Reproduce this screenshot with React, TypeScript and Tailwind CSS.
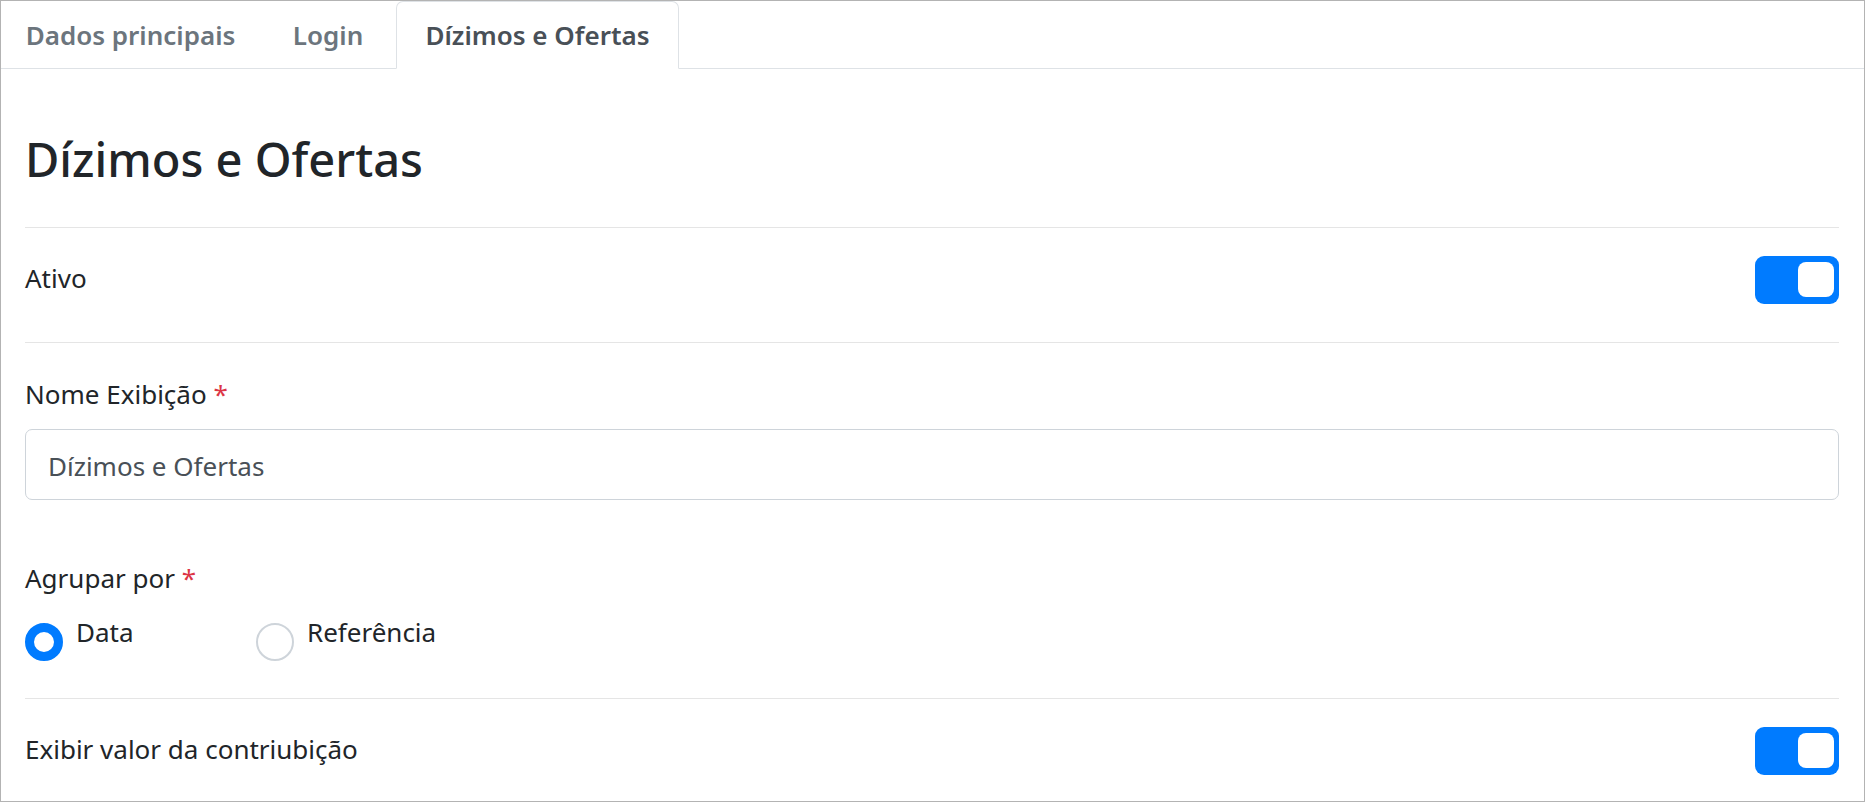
import { useState } from "react";

const FONT = { fontFamily: '"Noto Sans", "Open Sans", sans-serif' };

const tabs = [
  { label: "Dados principais", width: "w-[259px]" },
  { label: "Login", width: "w-[136px]" },
  { label: "Dízimos e Ofertas", width: "w-[283px]" },
];

const Toggle = ({ on }: { on: boolean }) => (
  <div
    className={`flex h-[48px] w-[84px] shrink-0 items-center rounded-[9px] px-[5px] ${
      on ? "justify-end bg-[#007bff]" : "justify-start bg-[#dee2e6]"
    }`}
  >
    <div className="mt-[-1px] h-[35px] w-[36px] rounded-[8px] bg-white"></div>
  </div>
);

const Radio = ({ checked, label }: { checked: boolean; label: string }) => (
  <div className="flex items-start">
    <div
      className={`mt-[12px] h-[38px] w-[38px] shrink-0 rounded-full ${
        checked ? "border-[9px] border-[#007bff]" : "border-2 border-[#ced4da]"
      }`}
    ></div>
    <span className="ml-[13px] leading-[42px]">{label}</span>
  </div>
);

const Required = () => <span className="text-[#dc3545]"> *</span>;

export default function App() {
  const [active, setActive] = useState(2);
  const [group, setGroup] = useState("data");

  return (
    <div
      className="h-[802px] w-[1865px] overflow-hidden border border-[#b3b3b3] bg-white text-[26px] text-[#212529]"
      style={FONT}
    >
      {/* Tabs */}
      <div className="flex h-[68px] border-b border-[#dee2e6]">
        {tabs.map((tab, i) => (
          <button
            key={tab.label}
            onClick={() => setActive(i)}
            className={`${tab.width} mb-[-1px] h-[68px] rounded-t-[7px] border pt-[12px] text-center align-top font-semibold leading-[42px] ${
              active === i
                ? "border-[#dee2e6] border-b-white bg-white text-[#495057]"
                : "border-transparent text-[#6c757d]"
            }`}
          >
            <div className="flex h-full items-start justify-center">{tab.label}</div>
          </button>
        ))}
      </div>

      <div className="pl-[24px] pr-[25px]">
        <div className="pb-[34px] pt-[57px]">
          <h2 className="text-[47px] font-medium leading-[67px]">Dízimos e Ofertas</h2>
        </div>

        <div className="border-t border-[#e5e5e5]"></div>

        <div className="mb-[38px] mt-[28px] flex items-start justify-between">
          <span className="mt-[1px] leading-[42px]">Ativo</span>
          <Toggle on={true} />
        </div>

        <div className="border-t border-[#e5e5e5]"></div>

        <div className="pt-[30px]">
          <label className="block leading-[42px]">
            Nome Exibição<Required />
          </label>
          <input
            readOnly
            value="Dízimos e Ofertas"
            className="mt-[14px] block h-[71px] w-full rounded-[7px] border border-[#ced4da] px-[22px] pt-[3px] text-[26px] text-[#495057] outline-none"
            style={FONT}
          />
        </div>

        <div className="mt-[57px]">
          <label className="block leading-[42px]">
            Agrupar por<Required />
          </label>
          <div className="mt-[12px] flex h-[49px] items-start">
            <div className="w-[231px]" onClick={() => setGroup("data")}>
              <Radio checked={group === "data"} label="Data" />
            </div>
            <div onClick={() => setGroup("ref")}>
              <Radio checked={group === "ref"} label="Referência" />
            </div>
          </div>
        </div>

        <div className="mt-[38px] border-t border-[#e5e5e5]"></div>

        <div className="mt-[28px] flex items-start justify-between">
          <span className="mt-[1px] leading-[42px]">Exibir valor da contriubição</span>
          <Toggle on={true} />
        </div>
      </div>
    </div>
  );
}
